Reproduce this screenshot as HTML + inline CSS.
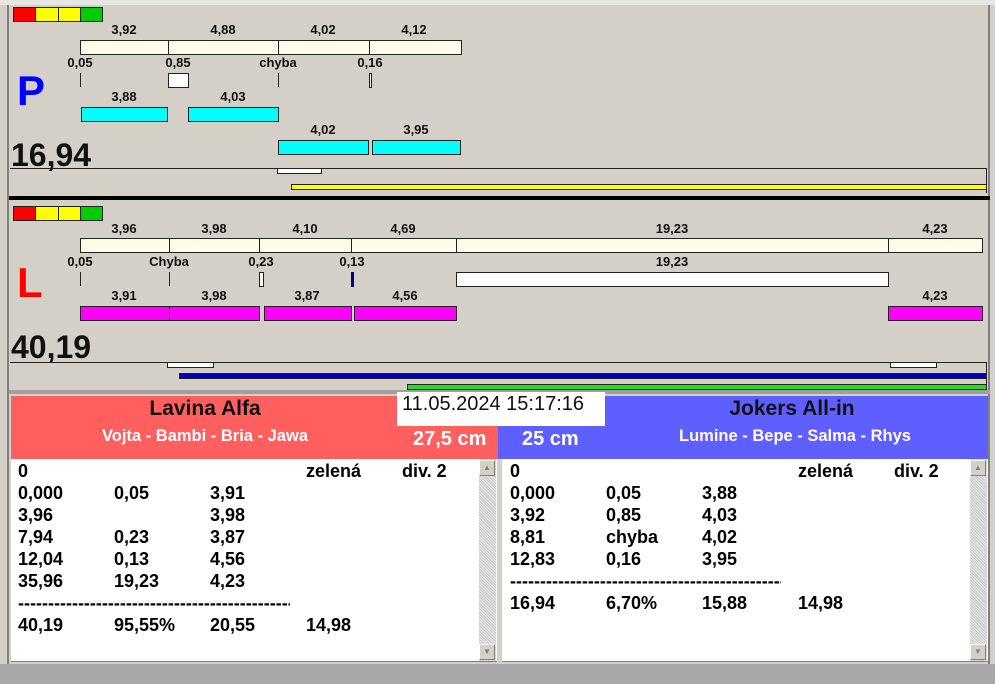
<!DOCTYPE html><html><head><meta charset="utf-8"><style>
*{margin:0;padding:0;box-sizing:border-box}
body{width:995px;height:684px;background:#d4d0c8;position:relative;overflow:hidden;font-family:"Liberation Sans",Arial,sans-serif}
div{position:absolute}
.t{font-size:13px;font-weight:bold;color:#111;transform:translateX(-50%);white-space:nowrap;line-height:14px}
.c{background:#fffbe6;border:1px solid #222;height:15px}
.cy{background:#00ffff;border:1px solid #222;height:15px}
.m{background:#ff00ff;border:1px solid #222;height:15px}
.w{background:#fff;border:1px solid #222}
.tk{width:1px;background:#222;height:14px}
.r{font-size:18px;font-weight:bold;line-height:22px;color:#000;white-space:nowrap}
.sb{background:repeating-linear-gradient(45deg,#e8e8e8 0 1px,#c8c8c8 1px 2px)}
.ar{width:16px;height:16px;background:#d4d0c8;border:1px solid;border-color:#fff #808080 #808080 #fff;font-size:8px;color:#808080;text-align:center;line-height:14px}
.big{font-size:32px;font-weight:bold;line-height:36px;color:#111}
</style></head><body>
<div style="left:0;top:0;width:995px;height:5px;background:#e8e6e0"></div>
<div style="left:7px;top:5px;width:2px;height:660px;background:#808080"></div>
<div style="left:988px;top:5px;width:2px;height:660px;background:#808080"></div>
<!-- P panel -->
<div style="left:13px;top:7px;width:90px;height:15px;border:1px solid #222;display:flex"><span style="flex:1;background:#f00;border-right:1px solid #222"></span><span style="flex:1;background:#ff0;border-right:1px solid #222"></span><span style="flex:1;background:#ff0;border-right:1px solid #222"></span><span style="flex:1;background:#0c0"></span></div>
<div class="t" style="left:124px;top:23px">3,92</div><div class="t" style="left:223px;top:23px">4,88</div><div class="t" style="left:323px;top:23px">4,02</div><div class="t" style="left:414px;top:23px">4,12</div>
<div class="c" style="left:80px;top:40px;width:89px"></div><div class="c" style="left:168px;top:40px;width:111px"></div><div class="c" style="left:278px;top:40px;width:92px"></div><div class="c" style="left:369px;top:40px;width:93px"></div>
<div class="t" style="left:80px;top:56px">0,05</div><div class="t" style="left:178px;top:56px">0,85</div><div class="t" style="left:278px;top:56px">chyba</div><div class="t" style="left:370px;top:56px">0,16</div>
<div class="tk" style="left:80px;top:73px"></div><div class="w" style="left:168px;top:73px;width:21px;height:15px"></div><div class="tk" style="left:278px;top:73px"></div><div class="w" style="left:369px;top:73px;width:3px;height:15px"></div>
<div style="left:17px;top:66px;font-size:42px;font-weight:bold;color:#0000ff;line-height:50px">P</div>
<div class="t" style="left:124px;top:90px">3,88</div><div class="t" style="left:233px;top:90px">4,03</div>
<div class="cy" style="left:81px;top:107px;width:87px"></div><div class="cy" style="left:188px;top:107px;width:91px"></div>
<div class="t" style="left:323px;top:123px">4,02</div><div class="t" style="left:416px;top:123px">3,95</div>
<div class="cy" style="left:278px;top:140px;width:91px"></div><div class="cy" style="left:372px;top:140px;width:89px"></div>
<div class="big" style="left:11px;top:137px">16,94</div>
<div style="left:10px;top:168px;width:977px;height:1px;background:#222"></div>
<div style="left:986px;top:168px;width:1px;height:25px;background:#222"></div>
<div class="w" style="left:277px;top:168px;width:45px;height:6px"></div>
<div style="left:291px;top:184px;width:696px;height:6px;background:#ffff00;border:1px solid #222"></div>
<div style="left:9px;top:196px;width:981px;height:4px;background:#000"></div>
<!-- L panel -->
<div style="left:13px;top:206px;width:90px;height:15px;border:1px solid #222;display:flex"><span style="flex:1;background:#f00;border-right:1px solid #222"></span><span style="flex:1;background:#ff0;border-right:1px solid #222"></span><span style="flex:1;background:#ff0;border-right:1px solid #222"></span><span style="flex:1;background:#0c0"></span></div>
<div class="t" style="left:124px;top:222px">3,96</div><div class="t" style="left:214px;top:222px">3,98</div><div class="t" style="left:305px;top:222px">4,10</div><div class="t" style="left:403px;top:222px">4,69</div><div class="t" style="left:672px;top:222px">19,23</div><div class="t" style="left:935px;top:222px">4,23</div>
<div class="c" style="left:80px;top:238px;width:90px"></div><div class="c" style="left:169px;top:238px;width:91px"></div><div class="c" style="left:259px;top:238px;width:93px"></div><div class="c" style="left:351px;top:238px;width:106px"></div><div class="c" style="left:456px;top:238px;width:433px"></div><div class="c" style="left:888px;top:238px;width:95px"></div>
<div class="t" style="left:80px;top:255px">0,05</div><div class="t" style="left:169px;top:255px">Chyba</div><div class="t" style="left:261px;top:255px">0,23</div><div class="t" style="left:352px;top:255px">0,13</div><div class="t" style="left:672px;top:255px">19,23</div>
<div class="tk" style="left:80px;top:272px"></div><div class="tk" style="left:169px;top:272px"></div><div class="w" style="left:259px;top:272px;width:5px;height:15px"></div><div style="left:351px;top:272px;width:3px;height:15px;background:#000080"></div><div class="w" style="left:456px;top:272px;width:433px;height:15px"></div>
<div style="left:17px;top:258px;font-size:42px;font-weight:bold;color:#ff0000;line-height:50px">L</div>
<div class="t" style="left:124px;top:289px">3,91</div><div class="t" style="left:214px;top:289px">3,98</div><div class="t" style="left:307px;top:289px">3,87</div><div class="t" style="left:405px;top:289px">4,56</div><div class="t" style="left:935px;top:289px">4,23</div>
<div class="m" style="left:80px;top:306px;width:90px"></div><div class="m" style="left:169px;top:306px;width:91px"></div><div class="m" style="left:264px;top:306px;width:88px"></div><div class="m" style="left:354px;top:306px;width:103px"></div><div class="m" style="left:888px;top:306px;width:95px"></div>
<div class="big" style="left:11px;top:329px">40,19</div>
<div style="left:10px;top:362px;width:977px;height:1px;background:#222"></div>
<div style="left:986px;top:362px;width:1px;height:28px;background:#222"></div>
<div class="w" style="left:167px;top:362px;width:47px;height:6px"></div><div class="w" style="left:890px;top:362px;width:47px;height:6px"></div>
<div style="left:179px;top:373px;width:808px;height:6px;background:#0000c0;border:1px solid #222"></div>
<div style="left:407px;top:384px;width:580px;height:6px;background:#22dd22;border:1px solid #222"></div>
<div style="left:9px;top:390px;width:981px;height:4px;background:#a0a0a0"></div>
<!-- headers -->
<div style="left:11px;top:396px;width:488px;height:63px;background:#ff5f5f"></div>
<div style="left:498px;top:396px;width:490px;height:63px;background:#5f5fff"></div>
<div style="left:205px;top:397px;font-size:21px;font-weight:bold;line-height:24px;color:#111;transform:translateX(-50%);white-space:nowrap">Lavina Alfa</div>
<div style="left:205px;top:427px;font-size:16.5px;font-weight:bold;line-height:18px;color:#fff;transform:translateX(-50%);white-space:nowrap">Vojta - Bambi - Bria - Jawa</div>
<div style="left:792px;top:397px;font-size:21px;font-weight:bold;line-height:24px;color:#111;transform:translateX(-50%);white-space:nowrap">Jokers All-in</div>
<div style="left:795px;top:427px;font-size:16.5px;font-weight:bold;line-height:18px;color:#fff;transform:translateX(-50%);white-space:nowrap">Lumine - Bepe - Salma - Rhys</div>
<div style="left:397px;top:392px;width:208px;height:34px;background:#fff;font-size:20px;line-height:24px;padding-left:5px;color:#111">11.05.2024 15:17:16</div>
<div style="left:413px;top:428px;font-size:20px;font-weight:bold;color:#fff;line-height:22px">27,5 cm</div>
<div style="left:522px;top:428px;font-size:20px;font-weight:bold;color:#fff;line-height:22px">25 cm</div>
<!-- lists -->
<div style="left:11px;top:459px;width:486px;height:203px;background:#fff;border-bottom:1px solid #808080"></div>
<div class="sb" style="left:479px;top:459px;width:17px;height:202px"></div>
<div class="ar" style="left:479px;top:460px">▲</div><div class="ar" style="left:479px;top:644px">▼</div>
<div style="left:502px;top:459px;width:486px;height:203px;background:#fff;border-bottom:1px solid #808080"></div>
<div class="sb" style="left:970px;top:459px;width:17px;height:202px"></div>
<div class="ar" style="left:970px;top:460px">▲</div><div class="ar" style="left:970px;top:644px">▼</div>
<div style="left:0;top:664px;width:995px;height:20px;background:#a8a8a8"></div>
<div class="r" style="left:18px;top:460px">0</div><div class="r" style="left:306px;top:460px">zelená</div><div class="r" style="left:402px;top:460px">div. 2</div>
<div class="r" style="left:18px;top:482px">0,000</div><div class="r" style="left:114px;top:482px">0,05</div><div class="r" style="left:210px;top:482px">3,91</div>
<div class="r" style="left:18px;top:504px">3,96</div><div class="r" style="left:210px;top:504px">3,98</div>
<div class="r" style="left:18px;top:526px">7,94</div><div class="r" style="left:114px;top:526px">0,23</div><div class="r" style="left:210px;top:526px">3,87</div>
<div class="r" style="left:18px;top:548px">12,04</div><div class="r" style="left:114px;top:548px">0,13</div><div class="r" style="left:210px;top:548px">4,56</div>
<div class="r" style="left:18px;top:570px">35,96</div><div class="r" style="left:114px;top:570px">19,23</div><div class="r" style="left:210px;top:570px">4,23</div>
<div class="r" style="left:18px;top:592px;width:272px;overflow:hidden">---------------------------------------------------</div>
<div class="r" style="left:18px;top:614px">40,19</div><div class="r" style="left:114px;top:614px">95,55%</div><div class="r" style="left:210px;top:614px">20,55</div><div class="r" style="left:306px;top:614px">14,98</div>
<div class="r" style="left:510px;top:460px">0</div><div class="r" style="left:798px;top:460px">zelená</div><div class="r" style="left:894px;top:460px">div. 2</div>
<div class="r" style="left:510px;top:482px">0,000</div><div class="r" style="left:606px;top:482px">0,05</div><div class="r" style="left:702px;top:482px">3,88</div>
<div class="r" style="left:510px;top:504px">3,92</div><div class="r" style="left:606px;top:504px">0,85</div><div class="r" style="left:702px;top:504px">4,03</div>
<div class="r" style="left:510px;top:526px">8,81</div><div class="r" style="left:606px;top:526px">chyba</div><div class="r" style="left:702px;top:526px">4,02</div>
<div class="r" style="left:510px;top:548px">12,83</div><div class="r" style="left:606px;top:548px">0,16</div><div class="r" style="left:702px;top:548px">3,95</div>
<div class="r" style="left:510px;top:570px;width:271px;overflow:hidden">---------------------------------------------------</div>
<div class="r" style="left:510px;top:592px">16,94</div><div class="r" style="left:606px;top:592px">6,70%</div><div class="r" style="left:702px;top:592px">15,88</div><div class="r" style="left:798px;top:592px">14,98</div>
</body></html>
